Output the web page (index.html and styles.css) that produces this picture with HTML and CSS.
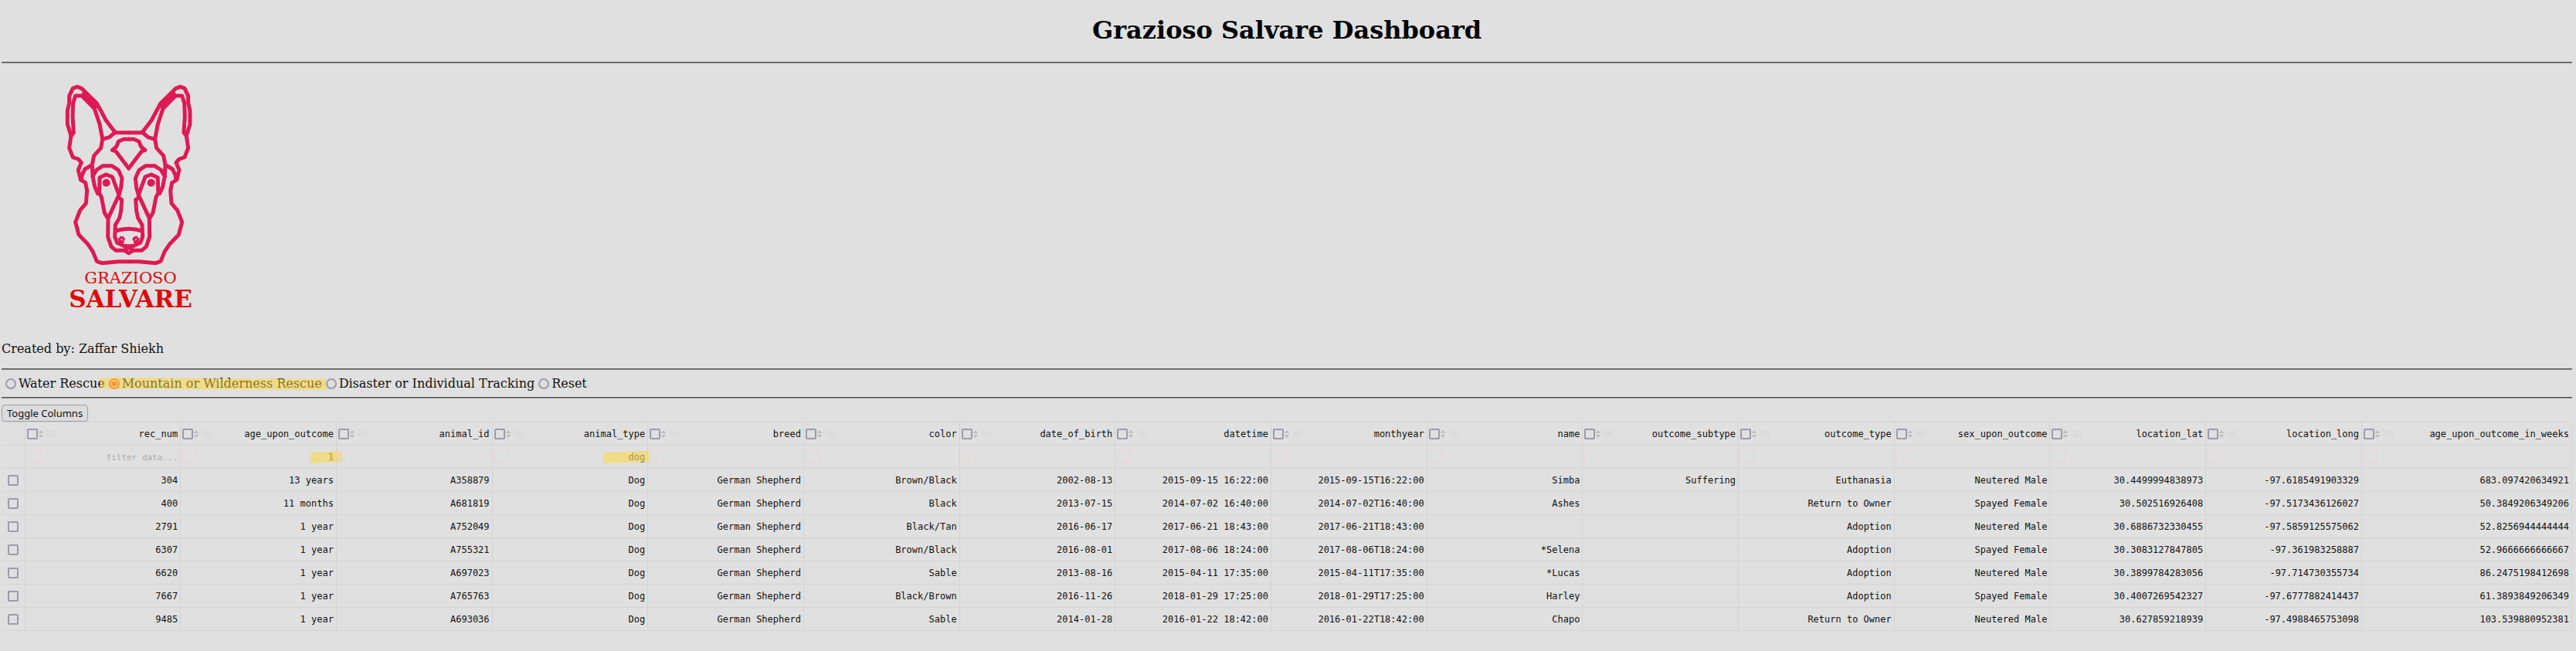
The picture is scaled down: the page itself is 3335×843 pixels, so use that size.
FILE: index.html
```html
<!DOCTYPE html>
<html lang="en">
<head>
<meta charset="utf-8">
<title>Grazioso Salvare Dashboard</title>
<link rel="stylesheet" href="styles.css">
</head>
<body>
<svg class="defs" aria-hidden="true">
  <symbol id="sort" viewBox="0 0 8 12"><path d="M4 1L7.3 5H.7zM4 11L.7 7h6.6z" fill="#bdbdbd"/></symbol>
  <symbol id="hide" viewBox="0 0 16 14"><path d="M1.500 7Q4.500 2.500 8 2.500T14.500 7Q11.500 11.500 8 11.500T1.500 7zM5.500 7a2.500 2.500 0 0 0 5 0a2.500 2.500 0 0 0-5 0M1 1l14 12" fill="none" stroke="#d8d8d8" stroke-width="1.200"/></symbol>
</svg>
<h1 class="title">Grazioso Salvare Dashboard</h1>
<hr class="rule">
<svg class="logo" viewBox="0 0 220 330" role="img" aria-label="Grazioso Salvare logo">
  <g transform="scale(.33333)" fill="none" stroke="#de1a55" stroke-width="15" stroke-linejoin="round" stroke-linecap="round">
    <g id="half">
      <path d="M320 245H268L232 198L196 131L138 74L120 67L103 73L89 103V130L82 160V212L96 258L89 305L103 341L124 348L136 362L124 390L133 428L152 440L158 470L154 520L131 547L113 593L126 642L160 677L180 706L196 745L215 752L280 746H320"/>
      <path d="M268 243L245 263L218 271L207 212L187 152L138 102H113L104 130L102 180L106 245L96 258M145 93L194 143"/>
      <path d="M218 271L212 305L185 335L178 370L180 415L188 455L200 482L206 470L207 420L232 408L256 417L282 487M178 370L150 387L139 410L136 428"/>
      <path d="M180 415L195 390L220 374H254L280 391L294 422L290 460L282 487L240 578L239 650L252 688L270 703H303L320 713M206 480L214 496L226 557L240 580"/>
      <path d="M282 498L293 506L290 550L284 577L268 604L266 650L275 673L300 685L320 687M268 627L295 621L320 619"/>
      <path d="M290 652Q303 654 300 661M284 658Q285 669 297 670" stroke-width="10"/>
      <path d="M320 271H300L280 280L272 300L256 313L270 318L320 384"/>
      <circle cx="233" cy="440" r="15" fill="#de1a55" stroke="none"/>
    </g>
    <use href="#half" transform="translate(640 0) scale(-1 1)"/>
    <path d="M303 690H337L331 711H309z" fill="#de1a55" stroke-width="5"/>
    <circle cx="320" cy="703" r="3" fill="#e8a0b8" stroke="none"/>
  </g>
  <text class="logo-small" x="109" y="277" text-anchor="middle">GRAZIOSO</text>
  <text class="logo-big" x="109" y="308" text-anchor="middle">SALVARE</text>
</svg>
<p class="author">Created by: Zaffar Shiekh</p>
<hr class="rule">
<div class="radios">
  <label class="radio"><input type="radio" name="rescue">Water Rescue</label>
  <label class="radio marked"><input type="radio" name="rescue" checked>Mountain or Wilderness Rescue</label>
  <label class="radio"><input type="radio" name="rescue">Disaster or Individual Tracking</label>
  <label class="radio"><input type="radio" name="rescue">Reset</label>
</div>
<hr class="rule">
<button class="toggle" type="button">Toggle Columns</button>
<table class="grid">
<colgroup><col class="c-select"><col span="15"><col class="c-last"></colgroup>
<thead>
<tr>
<th></th>
<th><div class="head"><input type="checkbox" aria-label="Select rec_num"><svg class="sort"><use href="#sort"/></svg><svg class="hide"><use href="#hide"/></svg><span>rec_num</span></div></th>
<th><div class="head"><input type="checkbox" aria-label="Select age_upon_outcome"><svg class="sort"><use href="#sort"/></svg><svg class="hide"><use href="#hide"/></svg><span>age_upon_outcome</span></div></th>
<th><div class="head"><input type="checkbox" aria-label="Select animal_id"><svg class="sort"><use href="#sort"/></svg><svg class="hide"><use href="#hide"/></svg><span>animal_id</span></div></th>
<th><div class="head"><input type="checkbox" aria-label="Select animal_type"><svg class="sort"><use href="#sort"/></svg><svg class="hide"><use href="#hide"/></svg><span>animal_type</span></div></th>
<th><div class="head"><input type="checkbox" aria-label="Select breed"><svg class="sort"><use href="#sort"/></svg><svg class="hide"><use href="#hide"/></svg><span>breed</span></div></th>
<th><div class="head"><input type="checkbox" aria-label="Select color"><svg class="sort"><use href="#sort"/></svg><svg class="hide"><use href="#hide"/></svg><span>color</span></div></th>
<th><div class="head"><input type="checkbox" aria-label="Select date_of_birth"><svg class="sort"><use href="#sort"/></svg><svg class="hide"><use href="#hide"/></svg><span>date_of_birth</span></div></th>
<th><div class="head"><input type="checkbox" aria-label="Select datetime"><svg class="sort"><use href="#sort"/></svg><svg class="hide"><use href="#hide"/></svg><span>datetime</span></div></th>
<th><div class="head"><input type="checkbox" aria-label="Select monthyear"><svg class="sort"><use href="#sort"/></svg><svg class="hide"><use href="#hide"/></svg><span>monthyear</span></div></th>
<th><div class="head"><input type="checkbox" aria-label="Select name"><svg class="sort"><use href="#sort"/></svg><svg class="hide"><use href="#hide"/></svg><span>name</span></div></th>
<th><div class="head"><input type="checkbox" aria-label="Select outcome_subtype"><svg class="sort"><use href="#sort"/></svg><svg class="hide"><use href="#hide"/></svg><span>outcome_subtype</span></div></th>
<th><div class="head"><input type="checkbox" aria-label="Select outcome_type"><svg class="sort"><use href="#sort"/></svg><svg class="hide"><use href="#hide"/></svg><span>outcome_type</span></div></th>
<th><div class="head"><input type="checkbox" aria-label="Select sex_upon_outcome"><svg class="sort"><use href="#sort"/></svg><svg class="hide"><use href="#hide"/></svg><span>sex_upon_outcome</span></div></th>
<th><div class="head"><input type="checkbox" aria-label="Select location_lat"><svg class="sort"><use href="#sort"/></svg><svg class="hide"><use href="#hide"/></svg><span>location_lat</span></div></th>
<th><div class="head"><input type="checkbox" aria-label="Select location_long"><svg class="sort"><use href="#sort"/></svg><svg class="hide"><use href="#hide"/></svg><span>location_long</span></div></th>
<th><div class="head"><input type="checkbox" aria-label="Select age_upon_outcome_in_weeks"><svg class="sort"><use href="#sort"/></svg><svg class="hide"><use href="#hide"/></svg><span>age_upon_outcome_in_weeks</span></div></th>
</tr>
<tr>
<td></td>
<td><div class="filter"><button type="button" aria-label="Toggle case"></button><input type="text" aria-label="Filter rec_num" placeholder="filter data..."></div></td>
<td><div class="filter marked-cell"><button type="button" aria-label="Toggle case"></button><input type="text" aria-label="Filter age_upon_outcome" value="1"></div></td>
<td><div class="filter"><button type="button" aria-label="Toggle case"></button><input type="text" aria-label="Filter animal_id"></div></td>
<td><div class="filter marked-cell wide"><button type="button" aria-label="Toggle case"></button><input type="text" aria-label="Filter animal_type" value="dog"></div></td>
<td><div class="filter"><button type="button" aria-label="Toggle case"></button><input type="text" aria-label="Filter breed"></div></td>
<td><div class="filter"><button type="button" aria-label="Toggle case"></button><input type="text" aria-label="Filter color"></div></td>
<td><div class="filter"><button type="button" aria-label="Toggle case"></button><input type="text" aria-label="Filter date_of_birth"></div></td>
<td><div class="filter"><button type="button" aria-label="Toggle case"></button><input type="text" aria-label="Filter datetime"></div></td>
<td><div class="filter"><button type="button" aria-label="Toggle case"></button><input type="text" aria-label="Filter monthyear"></div></td>
<td><div class="filter"><button type="button" aria-label="Toggle case"></button><input type="text" aria-label="Filter name"></div></td>
<td><div class="filter"><button type="button" aria-label="Toggle case"></button><input type="text" aria-label="Filter outcome_subtype"></div></td>
<td><div class="filter"><button type="button" aria-label="Toggle case"></button><input type="text" aria-label="Filter outcome_type"></div></td>
<td><div class="filter"><button type="button" aria-label="Toggle case"></button><input type="text" aria-label="Filter sex_upon_outcome"></div></td>
<td><div class="filter"><button type="button" aria-label="Toggle case"></button><input type="text" aria-label="Filter location_lat"></div></td>
<td><div class="filter"><button type="button" aria-label="Toggle case"></button><input type="text" aria-label="Filter location_long"></div></td>
<td><div class="filter"><button type="button" aria-label="Toggle case"></button><input type="text" aria-label="Filter age_upon_outcome_in_weeks"></div></td>
</tr>
</thead>
<tbody>
<tr><td class="select"><input type="checkbox" aria-label="Select row 304"></td><td>304</td><td>13 years</td><td>A358879</td><td>Dog</td><td>German Shepherd</td><td>Brown/Black</td><td>2002-08-13</td><td>2015-09-15 16:22:00</td><td>2015-09-15T16:22:00</td><td>Simba</td><td>Suffering</td><td>Euthanasia</td><td>Neutered Male</td><td>30.4499994838973</td><td>-97.6185491903329</td><td>683.097420634921</td></tr>
<tr><td class="select"><input type="checkbox" aria-label="Select row 400"></td><td>400</td><td>11 months</td><td>A681819</td><td>Dog</td><td>German Shepherd</td><td>Black</td><td>2013-07-15</td><td>2014-07-02 16:40:00</td><td>2014-07-02T16:40:00</td><td>Ashes</td><td></td><td>Return to Owner</td><td>Spayed Female</td><td>30.502516926408</td><td>-97.5173436126027</td><td>50.3849206349206</td></tr>
<tr><td class="select"><input type="checkbox" aria-label="Select row 2791"></td><td>2791</td><td>1 year</td><td>A752049</td><td>Dog</td><td>German Shepherd</td><td>Black/Tan</td><td>2016-06-17</td><td>2017-06-21 18:43:00</td><td>2017-06-21T18:43:00</td><td></td><td></td><td>Adoption</td><td>Neutered Male</td><td>30.6886732330455</td><td>-97.5859125575062</td><td>52.8256944444444</td></tr>
<tr><td class="select"><input type="checkbox" aria-label="Select row 6307"></td><td>6307</td><td>1 year</td><td>A755321</td><td>Dog</td><td>German Shepherd</td><td>Brown/Black</td><td>2016-08-01</td><td>2017-08-06 18:24:00</td><td>2017-08-06T18:24:00</td><td>*Selena</td><td></td><td>Adoption</td><td>Spayed Female</td><td>30.3083127847805</td><td>-97.361983258887</td><td>52.9666666666667</td></tr>
<tr><td class="select"><input type="checkbox" aria-label="Select row 6620"></td><td>6620</td><td>1 year</td><td>A697023</td><td>Dog</td><td>German Shepherd</td><td>Sable</td><td>2013-08-16</td><td>2015-04-11 17:35:00</td><td>2015-04-11T17:35:00</td><td>*Lucas</td><td></td><td>Adoption</td><td>Neutered Male</td><td>30.3899784283056</td><td>-97.714730355734</td><td>86.2475198412698</td></tr>
<tr><td class="select"><input type="checkbox" aria-label="Select row 7667"></td><td>7667</td><td>1 year</td><td>A765763</td><td>Dog</td><td>German Shepherd</td><td>Black/Brown</td><td>2016-11-26</td><td>2018-01-29 17:25:00</td><td>2018-01-29T17:25:00</td><td>Harley</td><td></td><td>Adoption</td><td>Spayed Female</td><td>30.4007269542327</td><td>-97.6777882414437</td><td>61.3893849206349</td></tr>
<tr><td class="select"><input type="checkbox" aria-label="Select row 9485"></td><td>9485</td><td>1 year</td><td>A693036</td><td>Dog</td><td>German Shepherd</td><td>Sable</td><td>2014-01-28</td><td>2016-01-22 18:42:00</td><td>2016-01-22T18:42:00</td><td>Chapo</td><td></td><td>Return to Owner</td><td>Neutered Male</td><td>30.627859218939</td><td>-97.4988465753098</td><td>103.539880952381</td></tr>
</tbody>
</table>
</body>
</html>
```
FILE: styles.css
```css
* { box-sizing: border-box; }
body {
  margin: 0 5px 0 2px;
  padding-top: 20px;
  background: #e0e0e0;
  color: #111;
  font: 16px/19px "DejaVu Serif", serif;
}
.defs { display: none; }
.title {
  margin: 0 0 22px;
  text-align: center;
  font-size: 32px;
  line-height: 38px;
  color: #000;
}
.rule {
  margin: 0;
  border: 0;
  border-top: 1px solid #585858;
  border-bottom: 1px solid #858585;
}
.logo { display: block; width: 220px; height: 330px; margin: 8px 0 22px 58px; }
.logo text { font-family: "DejaVu Serif", serif; fill: #de0a0a; }
.logo .logo-small { font-size: 21px; }
.logo .logo-big { font-size: 31px; font-weight: bold; }
.author { margin: 0 0 16px; }

.radios { display: flex; gap: 5px; padding: 8px 0 8px 5px; }
.radio { position: relative; display: flex; align-items: center; gap: 3px; }
input[type="radio"], input[type="checkbox"] {
  appearance: none;
  flex: none;
  width: 14px;
  height: 14px;
  margin: 0;
  border: 2px solid #9d9aab;
  border-radius: 2px;
}
input[type="radio"] { border-radius: 50%; position: relative; z-index: 1; }
input[type="radio"]:checked {
  border-color: #ff962e;
  background: radial-gradient(circle, #ff962e 0 3px, transparent 4px);
}
/* highlighter strokes */
.marked::after, .marked-cell::after {
  content: "";
  position: absolute;
  background: rgba(255, 214, 50, .5);
  pointer-events: none;
}
.marked::after {
  inset: 2px -6px 1px -11px;
  clip-path: polygon(0 0, 100% 12%, 100% 100%, 0 88%);
}
.marked-cell::after {
  right: -11px;
  top: 0;
  width: 41px;
  height: 16px;
  clip-path: polygon(0 12%, 100% 0, 100% 88%, 0 100%);
}
.marked-cell.wide::after { right: -5px; width: 59px; }

.toggle {
  display: block;
  height: 22px;
  margin-top: 8px;
  padding: 0 6px;
  border: 1px solid #9d9aab;
  border-radius: 4px;
  background: #dcdcdf;
  color: #111;
  font: 13px/20px "Noto Sans", sans-serif;
}
.grid {
  width: 100%;
  table-layout: fixed;
  border-collapse: collapse;
  font: 12px/15px "DejaVu Sans Mono", monospace;
}
.c-select { width: 30px; }
.c-last { width: 272px; }
.grid th, .grid td {
  height: 30px;
  padding: 1px 3px 0 2px;
  border: 1px solid #d3d3d3;
  text-align: right;
  font-weight: normal;
  white-space: nowrap;
}
.grid tr > :first-child { border-left: 0; }
.grid .select { padding: 0 6px 0 8px; text-align: left; }
.select input { display: block; }
.head { display: flex; align-items: center; }
.head span { margin-left: auto; }
.sort { width: 8px; height: 12px; }
.hide { width: 16px; height: 14px; margin-left: 2px; }
.filter { position: relative; display: flex; align-items: center; justify-content: space-between; }
.filter button {
  flex: none;
  width: 18px;
  height: 16px;
  padding: 0;
  border: 1px solid #ecd5da;
  border-radius: 2px;
  background: none;
}
.filter input {
  flex: 1;
  min-width: 0;
  padding: 0;
  border: 0;
  background: none;
  color: #555;
  font: 12px/15px "DejaVu Sans Mono", monospace;
  text-align: right;
}
.filter input::placeholder { color: #aaa; font-size: 11px; opacity: 1; }
```
